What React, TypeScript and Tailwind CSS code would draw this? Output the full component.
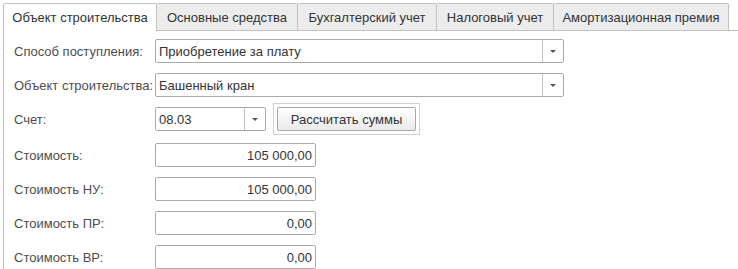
const tabs = [
    { title: "Объект строительства", w: "w-[154px]", active: true },
    { title: "Основные средства", w: "w-[141px]", active: false },
    { title: "Бухгалтерский учет", w: "w-[139px]", active: false },
    { title: "Налоговый учет", w: "w-[117px]", active: false },
    { title: "Амортизационная премия", w: "w-[175px]", active: false },
]

function Arrow() {
    return (
        <div className="flex w-[21px] h-full items-center justify-center border-l border-[#c4c4c4]">
            <svg width="6" height="3" viewBox="0 0 6 3">
                <path d="M0 0 H6 L3 3 Z" fill="#555" />
            </svg>
        </div>
    )
}

function Select({ value, width }: { value: string; width: string }) {
    return (
        <div className={`flex h-[24px] ${width} items-center rounded-[2px] border border-[#a9a9a9] bg-white`}>
            <div className="flex-1 pl-[3px] text-[#333]">{value}</div>
            <Arrow />
        </div>
    )
}

function Amount({ value }: { value: string }) {
    return (
        <div className="flex h-[24px] w-[161px] items-center justify-end rounded-[2px] border border-[#a9a9a9] bg-white pr-[3px] text-[#333]">
            {value}
        </div>
    )
}

function Row({ label, children, className }: { label: string; children: React.ReactNode; className?: string }) {
    return (
        <div className={`flex h-[24px] items-center ${className ?? ""}`}>
            <div className="w-[141px] text-[#4d4d4d]">{label}</div>
            {children}
        </div>
    )
}

export default function App() {
    return (
        <div className="h-[269px] w-[738px] overflow-hidden bg-white text-[13px] leading-none" style={{ fontFamily: '"Liberation Sans", Arial, sans-serif' }}>
            <div className="flex items-end pl-[3px] pt-[3px]">
                {tabs.map((tab, i) => (
                    <div
                        key={tab.title}
                        className={`flex h-[28px] ${tab.w} items-center justify-center rounded-t-[2px] border-t border-r border-[#c2c2c2] text-[#333] ${i === 0 ? "border-l" : ""} ${tab.active ? "bg-white" : "border-b bg-[#ececec]"}`}
                    >
                        {tab.title}
                    </div>
                ))}
                <div className="flex-1 border-b border-[#c2c2c2]" />
            </div>
            <div className="ml-[3px] flex h-[240px] flex-col border-l border-[#c2c2c2] pl-[10px] pt-[8px]">
                <Row label="Способ поступления:">
                    <Select value="Приобретение за плату" width="w-[409px]" />
                </Row>
                <Row label="Объект строительства:" className="mt-[10px]">
                    <Select value="Башенный кран" width="w-[409px]" />
                </Row>
                <Row label="Счет:" className="mt-[10px]">
                    <Select value="08.03" width="w-[111px]" />
                    <div className="-my-[4px] ml-[7px] flex h-[32px] w-[147px] items-center justify-center border border-[#d0d0d0]">
                        <div className="flex h-[24px] w-[139px] items-center justify-center rounded-[2px] border border-[#a9a9a9] bg-gradient-to-b from-white to-[#eaeaea] text-[#333]">
                            Рассчитать суммы
                        </div>
                    </div>
                </Row>
                <Row label="Стоимость:" className="mt-[12px]">
                    <Amount value="105 000,00" />
                </Row>
                <Row label="Стоимость НУ:" className="mt-[10px]">
                    <Amount value="105 000,00" />
                </Row>
                <Row label="Стоимость ПР:" className="mt-[10px]">
                    <Amount value="0,00" />
                </Row>
                <Row label="Стоимость ВР:" className="mt-[10px]">
                    <Amount value="0,00" />
                </Row>
            </div>
        </div>
    )
}
